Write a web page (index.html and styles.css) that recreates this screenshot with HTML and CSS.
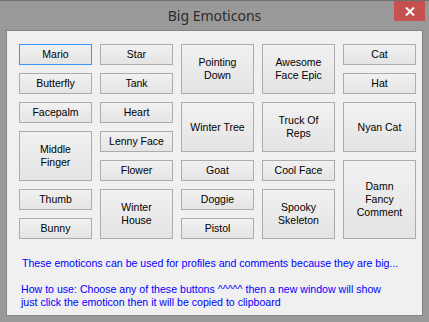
FILE: index.html
```html
<!DOCTYPE html>
<html lang="en">
  <head>
    <meta charset="UTF-8" />
    <meta name="viewport" content="width=device-width, initial-scale=1.0" />
    <title>Big Emoticons</title>
    <link rel="stylesheet" href="styles.css">
  </head>
  <body>
    <div class="window">
      <!-- Title Bar -->
      <div class="title-bar">
        <span class="title">Big Emoticons</span>
        <button class="close-button" aria-label="Close">
          <svg width="10" height="9" viewBox="0 0 10 9">
            <path d="M1 0.5 L9 8.5 M9 0.5 L1 8.5" stroke="#ffffff" stroke-width="2" />
          </svg>
        </button>
      </div>

      <!-- Client Area -->
      <div class="client">
        <div class="emoticon-grid">
          <!-- column 1 -->
          <button class="emo focused">Mario</button>
          <button class="emo">Butterfly</button>
          <button class="emo">Facepalm</button>
          <button class="emo tall">Middle<br>Finger</button>
          <button class="emo">Thumb</button>
          <button class="emo">Bunny</button>
          <!-- column 2 -->
          <button class="emo">Star</button>
          <button class="emo">Tank</button>
          <button class="emo">Heart</button>
          <button class="emo">Lenny Face</button>
          <button class="emo">Flower</button>
          <button class="emo tall">Winter<br>House</button>
          <!-- column 3 -->
          <button class="emo tall">Pointing<br>Down</button>
          <button class="emo tall">Winter Tree</button>
          <button class="emo">Goat</button>
          <button class="emo">Doggie</button>
          <button class="emo">Pistol</button>
          <!-- column 4 -->
          <button class="emo tall">Awesome<br>Face Epic</button>
          <button class="emo tall">Truck Of<br>Reps</button>
          <button class="emo">Cool Face</button>
          <button class="emo tall">Spooky<br>Skeleton</button>
          <!-- column 5 -->
          <button class="emo">Cat</button>
          <button class="emo">Hat</button>
          <button class="emo tall">Nyan Cat</button>
          <button class="emo taller">Damn<br>Fancy<br>Comment</button>
        </div>

        <p class="info">These emoticons can be used for profiles and comments because they are big...</p>
        <p class="info how-to">How to use: Choose any of these buttons ^^^^^ then a new window will show<br>just click the emoticon then it will be copied to clipboard</p>
      </div>
    </div>
  </body>
</html>
```

FILE: styles.css
```css
/* Global Styles */
body {
  margin: 0;
  padding: 0;
  background-color: #999999; /* Window frame grey */
  font-family: "Liberation Sans", Arial, sans-serif;
  overflow: hidden;
}

/* Window */
.window {
  width: 429px;
  height: 322px;
  box-sizing: border-box;
  border-top: 1px solid #6f6f6f;
  padding: 0 6px 6px 6px;
  display: flex;
  flex-direction: column;
}

/* Title Bar */
.title-bar {
  position: relative;
  height: 29px;
  display: flex;
  justify-content: center;
  align-items: center;
}

.title {
  font-family: "Noto Sans", "Open Sans", sans-serif;
  font-size: 14px;
  color: #2b2b2b;
}

.close-button {
  position: absolute;
  top: 0;
  right: -2px;
  width: 31px;
  height: 20px;
  padding: 0;
  border: none;
  background-color: #c75050;
  display: flex;
  justify-content: center;
  align-items: center;
}

/* Client Area */
.client {
  flex: 1;
  background-color: #f0f0f0; /* Light grey background */
  border: 1px solid #858585;
  padding: 13px 0 0 12px;
}

.emoticon-grid {
  display: grid;
  grid-template-columns: repeat(5, 73px);
  grid-template-rows: repeat(7, 21px);
  grid-auto-flow: column;
  gap: 8px;
}

.emo {
  margin: 0;
  padding: 0;
  font-family: "Liberation Sans", Arial, sans-serif;
  font-size: 10.5px;
  line-height: 13px;
  color: #000000;
  background: linear-gradient(#f1f1f1, #e4e4e4);
  border: 1px solid #acacac;
  border-radius: 0;
  text-align: center;
}

.emo.tall {
  grid-row: span 2;
}

.emo.taller {
  grid-row: span 3;
}

.emo.focused {
  border-color: #3399ff; /* Focus blue */
}

/* Info Text */
.info {
  margin: 18px 0 0 3px;
  font-size: 10.6px;
  line-height: 13px;
  color: #0000ff;
}

.how-to {
  margin-top: 13px;
  margin-left: 2px;
}
```
